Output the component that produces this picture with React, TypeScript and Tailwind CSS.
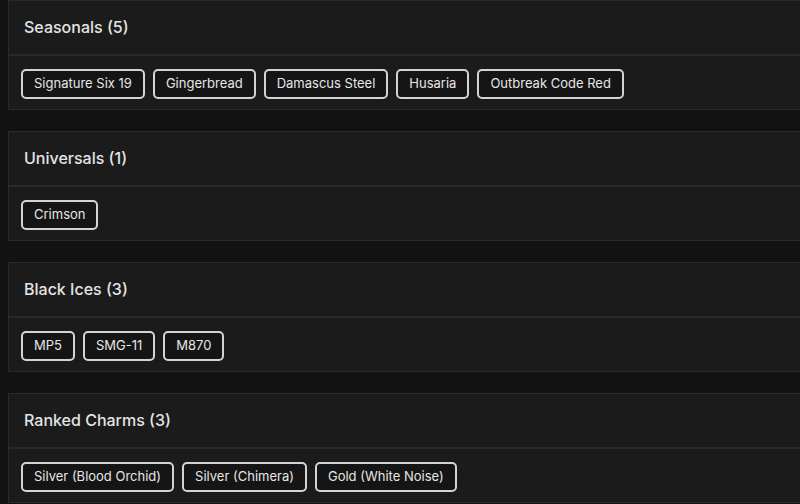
import React from 'react';

type Group = {
  title: string;
  items: string[];
};

const groups: Group[] = [
  { title: 'Seasonals', items: ['Signature Six 19', 'Gingerbread', 'Damascus Steel', 'Husaria', 'Outbreak Code Red'] },
  { title: 'Universals', items: ['Crimson'] },
  { title: 'Black Ices', items: ['MP5', 'SMG-11', 'M870'] },
  { title: 'Ranked Charms', items: ['Silver (Blood Orchid)', 'Silver (Chimera)', 'Gold (White Noise)'] },
];

const Chip: React.FC<{ label: string }> = ({ label }) => (
  <span className="flex h-[30px] items-center rounded-[5px] border-2 border-[#d4d4d4] bg-[#151515] px-[11px] text-[13px] text-[#e6e6e6]">
    {label}
  </span>
);

const GroupCard: React.FC<{ group: Group }> = ({ group }) => (
  <section className="w-[808px] border border-[#2a2a2a] bg-[#1b1b1b]">
    <header className="flex h-[55px] items-center border-b-2 border-[#2a2a2a] px-[15px] pb-[2px]">
      <h2 className="text-[16px] font-medium text-[#e4e4e4]">
        {group.title} ({group.items.length})
      </h2>
    </header>
    <div className="flex h-[53px] items-center gap-2 px-3 pt-[2px]">
      {group.items.map((item) => (
        <Chip key={item} label={item} />
      ))}
    </div>
  </section>
);

export default function App() {
  return (
    <div
      className="h-[504px] w-[800px] overflow-hidden bg-[#121212] pl-2"
      style={{ fontFamily: 'Inter, "Noto Sans", sans-serif' }}
    >
      <div className="flex flex-col gap-[21px]">
        {groups.map((g) => (
          <GroupCard key={g.title} group={g} />
        ))}
      </div>
    </div>
  );
}
